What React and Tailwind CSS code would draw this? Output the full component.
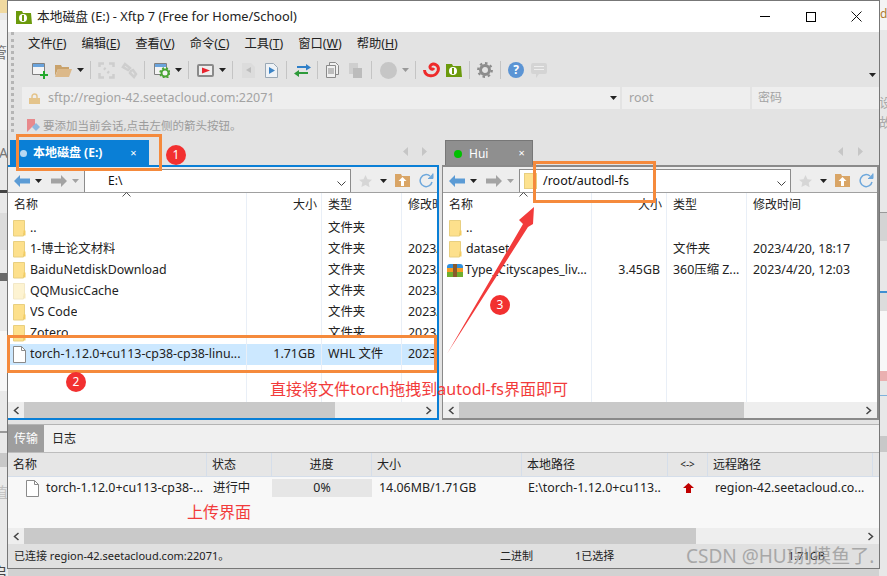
import React from "react";

const FONT = "font-['Noto_Sans','Noto_Sans_CJK_SC',sans-serif]";

function Folder({ pale }) {
  return (
    <svg width="13" height="17" viewBox="0 0 13 17" className="shrink-0">
      <path d="M.5.5h11v12l-1 .5v3H.5z" fill={pale ? "#fdf3d2" : "#fde08c"} stroke={pale ? "#f2e8c8" : "#e8cf80"} />
      <path d="M10.5 10.5h2v5h-2z" fill={pale ? "#f6e8bd" : "#f3cc62"} />
    </svg>
  );
}

function FileIcon() {
  return (
    <svg width="13" height="17" viewBox="0 0 13 17" className="shrink-0">
      <path d="M.5.5h8l4 4v12H.5z" fill="#fff" stroke="#8a8a8a" />
      <path d="M8.5.5v4h4" fill="none" stroke="#8a8a8a" />
    </svg>
  );
}

function ZipIcon() {
  return (
    <svg width="16" height="14" viewBox="0 0 16 14" className="shrink-0 -mr-[2px]">
      <path d="M0 4a3 3 0 0 1 3-3h10a3 3 0 0 1 3 3v1H0z" fill="#2f8fdc" />
      <path d="M0 5h16v4H0z" fill="#f59a23" />
      <path d="M0 9h16v5H0z" fill="#6fae2e" />
      <path d="M6 1h4v13H6z" fill="#8a5a2b" />
    </svg>
  );
}

function Caret({ color = "#222", className = "" }) {
  return (
    <svg width="7" height="4" viewBox="0 0 7 4" className={`shrink-0 ${className}`}>
      <path d="M0 0h7L3.5 4z" fill={color} />
    </svg>
  );
}

function Sep({ className = "" }) {
  return <div className={`w-px h-[18px] bg-[#c4c4c4] shrink-0 ${className}`} />;
}

function XftpLogo({ className = "" }) {
  return (
    <svg width="16" height="14" viewBox="0 0 16 14" className={`shrink-0 ${className}`}>
      <path d="M0 1h6l1 2h8l1 11H0z" fill="#6b9a0c" />
      <circle cx="7" cy="8" r="4" fill="#fff" />
      <path d="M7 5v6" stroke="#6b9a0c" strokeWidth="2" />
    </svg>
  );
}

function Toolbar() {
  return (
    <div className="flex items-center h-[26px] pl-[24px] shrink-0">
      <svg width="16" height="17" viewBox="0 0 16 17" className="shrink-0">
        <path d="M.5 1.5h12v11H.5z" fill="#f4f4f4" stroke="#808080" />
        <path d="M1 2h11v3H1z" fill="#6aa3dc" />
        <path d="M11 9h2v3h3v2h-3v3h-2v-3H8v-2h3z" fill="#22a82c" />
      </svg>
      <svg width="17" height="13" viewBox="0 0 17 13" className="ml-[7px] shrink-0">
        <path d="M0 1h6l1 2h7v2H3L0 12z" fill="#c9a26b" />
        <path d="M3 5h14l-3 8H0z" fill="#dcb98a" />
      </svg>
      <Caret className="ml-[5px]" />
      <Sep className="ml-[6px]" />
      <svg width="17" height="17" viewBox="0 0 17 17" fill="none" stroke="#cecece" strokeWidth="2.500" className="ml-[7px] shrink-0">
        <path d="M1.500 5V1.500H6M15.500 12v3.500H11M11 1.500h4.500V5M1.500 11v4.500H6M6 6l1.500 1.500M11 11L9.500 9.500" />
      </svg>
      <svg width="17" height="17" viewBox="0 0 17 17" fill="none" stroke="#cecece" strokeWidth="2.500" className="ml-[6px] shrink-0">
        <path d="M2 5l2-3 5 4-2 2zM10 9l2-1 3 4-2 3-4-4z" />
      </svg>
      <Sep className="ml-[6px]" />
      <svg width="16" height="16" viewBox="0 0 16 16" className="ml-[9px] shrink-0">
        <path d="M.5 1.500h12v11H.5z" fill="#f4f4f4" stroke="#808080" />
        <path d="M1 2h11v3H1z" fill="#6aa3dc" />
        <circle cx="11" cy="11" r="3.500" fill="#f4f4f4" stroke="#4aa534" strokeWidth="2" />
        <circle cx="11" cy="11" r="5" fill="none" stroke="#4aa534" strokeWidth="1.500" strokeDasharray="2 2" />
      </svg>
      <Caret className="ml-[5px]" />
      <Sep className="ml-[6px]" />
      <svg width="17" height="13" viewBox="0 0 17 13" className="ml-[8px] shrink-0">
        <rect x="1" y="1" width="15" height="11" rx="1" fill="#eee" stroke="#8a8a8a" strokeWidth="2" />
        <path d="M5 3.500l8 3-8 3z" fill="#e8232e" />
      </svg>
      <Caret className="ml-[5px]" />
      <Sep className="ml-[6px]" />
      <svg width="13" height="15" viewBox="0 0 13 15" className="ml-[9px] shrink-0">
        <path d="M0 0h9l4 4v11H0z" fill="#dcdcdc" />
        <path d="M9 4v6L4 7z" fill="#bdbdbd" />
      </svg>
      <svg width="13" height="15" viewBox="0 0 13 15" className="ml-[10px] shrink-0">
        <path d="M.5.500h8l4 4v10H.5z" fill="#eef2f6" stroke="#9aa8b5" />
        <path d="M4 4v7l6-3.500z" fill="#3d84c6" />
      </svg>
      <Sep className="ml-[8px]" />
      <svg width="17" height="13" viewBox="0 0 17 13" className="ml-[7px] shrink-0">
        <path d="M3 2h9V0l5 3.500-5 3V4H3z" fill="#2f7fc8" />
        <path d="M14 8H5V6l-5 3.500 5 3.500v-3h9z" fill="#2d9a3a" />
      </svg>
      <Sep className="ml-[6px]" />
      <svg width="13" height="16" viewBox="0 0 13 16" fill="#f0f0f0" stroke="#8a8a8a" className="ml-[8px] shrink-0">
        <path d="M3.500 .5h6l3 3v9h-9z" />
        <path d="M.5 3.500h9v12h-9z" />
        <path d="M2 7h6M2 9h6M2 11h6" />
      </svg>
      <svg width="13" height="16" viewBox="0 0 13 16" className="ml-[10px] shrink-0">
        <path d="M0 1h9v11H0z" fill="#cfcfcf" />
        <path d="M4 6h9v10H4z" fill="#bcbcbc" />
      </svg>
      <Sep className="ml-[9px]" />
      <div className="w-[17px] h-[17px] rounded-full bg-[#c6c6c6] ml-[8px] shrink-0" />
      <Caret color="#999" className="ml-[5px]" />
      <Sep className="ml-[6px]" />
      <svg width="17" height="17" viewBox="0 0 17 17" fill="none" stroke="#ee2b2b" strokeWidth="3" className="ml-[7px] shrink-0">
        <path d="M1.500 8C2 15 12 16 15 9 17 3 10 0 7.500 3.500 6 6 9 9 11 6" />
      </svg>
      <XftpLogo className="ml-[6px]" />
      <Sep className="ml-[7px]" />
      <svg width="16" height="16" viewBox="0 0 16 16" className="ml-[7px] shrink-0">
        <circle cx="8" cy="8" r="4.500" fill="none" stroke="#8c8c8c" strokeWidth="3" />
        <circle cx="8" cy="8" r="6.800" fill="none" stroke="#8c8c8c" strokeWidth="2.200" strokeDasharray="2.500 2.800" />
      </svg>
      <Sep className="ml-[7px]" />
      <div className="w-[16px] h-[16px] ml-[7px] shrink-0 rounded-full bg-[#5b94d4] text-white text-[12px] leading-[16px] text-center font-bold">?</div>
      <svg width="16" height="15" viewBox="0 0 16 15" className="ml-[7px] shrink-0">
        <path d="M2 0h12a2 2 0 0 1 2 2v7a2 2 0 0 1-2 2H8l-3 4v-4H2a2 2 0 0 1-2-2V2a2 2 0 0 1 2-2z" fill="#d4d4d4" />
        <path d="M3 3.500h10M3 6.500h10" stroke="#eee" />
      </svg>
      <Caret className="ml-auto mr-[3px] mt-[10px]" />
    </div>
  );
}

function NavBar({ path, hasFolder }) {
  return (
    <div className="flex items-center h-[25px] pt-[2px] bg-[#eeeeee] shrink-0">
      <svg width="16" height="12" viewBox="0 0 16 12" className="ml-[6px] shrink-0">
        <path d="M0 6l6-6v3.500h10v5H6V12z" fill="#5b9bd5" />
      </svg>
      <Caret className="ml-[5px]" />
      <svg width="16" height="12" viewBox="0 0 16 12" className="ml-[9px] shrink-0">
        <path d="M16 6l-6-6v3.500H0v5h10V12z" fill="#a3a3a3" />
      </svg>
      <Caret color="#a3a3a3" className="ml-[5px]" />
      <div className="ml-[5px] flex-1 h-[23px] bg-white border-x border-t border-[#8c8c8c] flex items-center relative">
        {hasFolder ? (
          <>
            <div className="w-[13px] h-[16px] ml-[4px] bg-[#fde28f] border border-[#e8cf80]" />
            <span className="ml-[6px] text-[12.500px] text-[#111]">{path}</span>
          </>
        ) : (
          <span className="ml-[23px] text-[12px] text-[#111]">{path}</span>
        )}
        <svg width="9" height="5" viewBox="0 0 9 5" className="absolute right-[4px] top-[11px]" fill="none" stroke="#444">
          <path d="M.5.5l4 4 4-4" />
        </svg>
      </div>
      <svg width="13" height="12" viewBox="0 0 13 12" className="ml-[8px] shrink-0">
        <path d="M6.500 0l2 4.300 4.500.5-3.300 3 .9 4.500-4.100-2.300L2.400 12l.9-4.500L0 4.800l4.500-.5z" fill="#d6d6d6" />
      </svg>
      <Caret className="ml-[8px]" />
      <svg width="15" height="13" viewBox="0 0 15 13" className="ml-[8px] shrink-0">
        <path d="M0 0h6l1 2h8v11H0z" fill="#d9a566" />
        <path d="M7.500 3l4 4H9v5H6V7H3.500z" fill="#fff" />
      </svg>
      <svg width="15" height="15" viewBox="0 0 15 15" className="ml-[9px] mr-[3px] shrink-0" fill="none" stroke="#6ea8dc" strokeWidth="1.500">
        <path d="M13 9a6 6 0 1 1-2-6" />
        <path d="M9 5.500h5v-5" strokeWidth="1" fill="#6ea8dc" />
      </svg>
    </div>
  );
}

function ColHead({ label, w, right, last }) {
  return (
    <div
      className={`h-full shrink-0 flex items-center text-[12px] text-[#222] ${right ? "justify-end pr-[5px]" : "pl-[6px]"} ${last ? "overflow-hidden whitespace-nowrap" : ""}`}
      style={{ width: w }}
    >
      {label}
    </div>
  );
}

function FileRow({ icon, name, size, type, date, cols, selected, iconPad = 5 }) {
  return (
    <div className={`flex h-[21px] items-center text-[12.400px] text-[#222] whitespace-nowrap ${selected ? "bg-[#cce8ff]" : ""}`}>
      <div className="flex items-center overflow-hidden shrink-0" style={{ width: cols[0], paddingLeft: iconPad }}>
        {icon}
        <span className="ml-[4px] overflow-hidden">{name}</span>
      </div>
      <div className="text-right pr-[7px] shrink-0" style={{ width: cols[1] }}>{size}</div>
      <div className="pl-[6px] overflow-hidden shrink-0" style={{ width: cols[2] }}>{type}</div>
      <div className="pl-[6px] overflow-hidden" style={{ width: cols[3] }}>{date}</div>
    </div>
  );
}

function HScroll({ thumbWidth, thumbLeft = 4 }) {
  return (
    <div className="h-[16px] bg-[#eeeeee] flex items-center shrink-0">
      <svg width="7" height="9" viewBox="0 0 7 9" className="ml-[5px] shrink-0" fill="none" stroke="#444" strokeWidth="1.500">
        <path d="M5.500 1l-4 3.500 4 3.500" />
      </svg>
      <div className="h-full bg-[#c9c9c9]" style={{ width: thumbWidth, marginLeft: thumbLeft }} />
      <svg width="7" height="9" viewBox="0 0 7 9" className="ml-auto mr-[5px] shrink-0" fill="none" stroke="#444" strokeWidth="1.500">
        <path d="M1.500 1l4 3.500-4 3.500" />
      </svg>
    </div>
  );
}

function Panel({ cols, rows, path, hasFolder, scrollW, border, caretLeft, className }) {
  return (
    <div className={`flex flex-col h-[255px] border-t-2 border-b-2 border-r-2 ${border} ${className}`}>
      <NavBar path={path} hasFolder={hasFolder} />
      <div className="flex-1 bg-white relative overflow-hidden flex flex-col">
        <div className="flex h-[23px] pt-[1px] border-t border-[#a0a0a0] shrink-0 items-center">
          <ColHead label="名称" w={cols[0]} />
          <ColHead label="大小" w={cols[1]} right />
          <ColHead label="类型" w={cols[2]} />
          <ColHead label="修改时间" w={cols[3]} last />
        </div>
        <div className="pt-[3px] flex-1">{rows}</div>
        <div className="absolute top-[1px] bottom-0 border-r border-[#e9eff7]" style={{ left: cols[0] - 1 }} />
        <div className="absolute top-[1px] bottom-0 border-r border-[#e9eff7]" style={{ left: cols[0] + cols[1] - 1 }} />
        <div className="absolute top-[1px] bottom-0 border-r border-[#e9eff7]" style={{ left: cols[0] + cols[1] + cols[2] - 1 }} />
        <svg width="9" height="5" viewBox="0 0 9 5" className="absolute top-0" style={{ left: caretLeft }} fill="none" stroke="#555">
          <path d="M.5 4.500l4-4 4 4" />
        </svg>
      </div>
      <HScroll thumbWidth={scrollW} />
    </div>
  );
}

function TransferCell({ w, children, className = "" }) {
  return (
    <div className={`shrink-0 overflow-hidden whitespace-nowrap ${className}`} style={{ width: w }}>
      {children}
    </div>
  );
}

const LEFT_COLS = [239, 75, 80, 35];
const RIGHT_COLS = [149, 75, 80, 130];
const TR_COLS = [199, 65, 100, 150, 146, 40, 165];

function Annotation({ n, className }) {
  return (
    <div className={`absolute w-[20px] h-[20px] rounded-full bg-[#f23030] text-white text-[12px] leading-[20px] text-center ${className}`}>
      {n}
    </div>
  );
}

export default function App() {
  return (
    <div className={`w-[887px] h-[576px] relative overflow-hidden bg-[#d2d2d2] ${FONT}`}>
      {/* desktop behind the window */}
      <div className="absolute left-0 top-0 w-[8px] h-[576px] bg-[#e9e9e9] overflow-hidden text-[#777]">
        <div className="h-[13px] bg-[#f0d9a0]" />
        <div className="mt-[7px] h-[110px] bg-[#f2f2f2]" />
        <div className="mt-[60px] h-[3px] bg-[#444]" />
        <div className="mt-[20px] h-[37px] bg-[#dcdcdc]" />
        <div className="mt-[23px] h-[8px] bg-[#6a6a6a]" />
        <div className="mt-[50px] h-[60px] bg-[#f7f7f7]" />
        <div className="mt-[40px] h-[2px] bg-[#999]" />
        <div className="mt-[20px] h-[14px] bg-[#c8c8c8]" />
        <span className="absolute left-[-8px] top-[42px] text-[15px] leading-[20px]">管</span>
        <span className="absolute left-[-1px] top-[143px] text-[14px] leading-[20px]">A</span>
        <span className="absolute left-[-7px] top-[482px] text-[15px] leading-[20px] text-[#c0c0c0]">值</span>
        <span className="absolute left-[-8px] top-[562px] text-[15px] leading-[20px] text-[#444]">启</span>
      </div>
      <div className="absolute right-0 top-0 w-[8px] h-[576px] bg-[#e8e8e8] overflow-hidden">
        <div className="h-[30px] bg-[#f4f4f4]" />
        <div className="mt-[182px] h-px bg-[#999]" />
        <div className="h-[28px] bg-[#d4d4d4]" />
        <div className="mt-[50px] h-[2px] bg-[#3f8fd2]" />
        <div className="h-[18px] bg-[#dcdcdc]" />
        <div className="h-[60px] bg-[#f8f8f8]" />
        <div className="h-[10px] bg-[#eab0b0]" />
        <div className="mt-[14px] h-px bg-[#7fb2dc]" />
        <div className="mt-[40px] h-[16px] bg-[#c8c8c8]" />
        <span className="absolute left-[1px] top-[6px] text-[12px] leading-[16px] text-[#b07a30]">d</span>
        <span className="absolute left-[0px] top-[92px] text-[13px] leading-[20px] text-[#aaa]">设</span>
        <span className="absolute left-[0px] top-[112px] text-[13px] leading-[20px] text-[#aaa]">故</span>
      </div>

      {/* window */}
      <div className="absolute left-[7px] top-0 w-[873px] h-[569px] border border-[#777] flex flex-col bg-[#e3e3e3]">
        <div className="absolute left-[3px] top-[31px] h-[100px] border-l-[3px] border-dotted border-[#b5b5b5]" />

        <div className="h-[31px] bg-white flex items-center shrink-0">
          <XftpLogo className="ml-[8px]" />
          <span className="ml-[5px] text-[12.750px] text-[#222]">本地磁盘 (E:) - Xftp 7 (Free for Home/School)</span>
          <div className="ml-auto flex items-center">
            <div className="w-[10px] h-px bg-black mr-[36px]" />
            <div className="w-[10px] h-[10px] border border-black mr-[35px]" />
            <svg width="11" height="11" viewBox="0 0 11 11" className="mr-[17px]" stroke="#111">
              <path d="M.5.500l10 10M10.500.500l-10 10" />
            </svg>
          </div>
        </div>

        <div className="flex h-[25px] items-center gap-[15px] pl-[20px] text-[12.300px] text-[#222] shrink-0">
          <span>文件(<u>F</u>)</span>
          <span>编辑(<u>E</u>)</span>
          <span>查看(<u>V</u>)</span>
          <span>命令(<u>C</u>)</span>
          <span>工具(<u>T</u>)</span>
          <span>窗口(<u>W</u>)</span>
          <span>帮助(<u>H</u>)</span>
        </div>

        <Toolbar />

        <div className="flex h-[22px] mt-[4px] ml-[14px] gap-[2px] text-[12.500px] text-[#a3a3a3] shrink-0">
          <div className="w-[598px] bg-[#eeeeee] flex items-center pl-[7px] relative">
            <svg width="11" height="11" viewBox="0 0 11 11">
              <path d="M3 5V3.500a2.500 2.500 0 0 1 5 0V5" fill="none" stroke="#e4c48c" strokeWidth="1.500" />
              <path d="M0 5h11v6H0z" fill="#e4c48c" />
            </svg>
            <span className="ml-[8px]">sftp://region-42.seetacloud.com:22071</span>
            <Caret className="absolute right-[3px] top-[9px]" />
          </div>
          <div className="w-[128px] bg-[#eeeeee] flex items-center pl-[7px]">root</div>
          <div className="flex-1 bg-[#eeeeee] flex items-center pl-[6px] text-[12px]">密码</div>
        </div>

        <div className="flex items-center h-[25px] mt-[4px] ml-[19px] text-[11.500px] text-[#9c9c9c] shrink-0">
          <svg width="13" height="13" viewBox="0 0 13 13" className="shrink-0">
            <path d="M0 0h8v6l-3 2-5 5z" fill="#e8898c" />
            <path d="M5 8l4-4 4 4-4 4z" fill="#8eb8de" />
          </svg>
          <span className="ml-[3px]">要添加当前会话,点击左侧的箭头按钮。</span>
        </div>

        {/* tabs */}
        <div className="flex h-[27px] shrink-0">
          <div className="w-[431px] shrink-0 flex items-end">
            <div className="w-[139px] h-[25px] ml-[2px] pt-[1px] bg-[#0a7fd6] text-white flex items-center pl-[10px] text-[12px] font-bold">
              <div className="w-[7px] h-[7px] rounded-full bg-[#b9d9f2]" />
              <span className="ml-[6px]">本地磁盘 (E:)</span>
              <span className="ml-[28px] font-normal text-[11px]">×</span>
            </div>
            <svg width="30" height="9" viewBox="0 0 30 9" className="ml-auto mb-[9px] mr-[6px]" fill="#c6c6c6">
              <path d="M5 0v9L0 4.500zM19 0v9l5-4.500z" />
            </svg>
          </div>
          <div className="flex-1 flex items-end ml-[6px]">
            <div className="w-[88px] h-[25px] pt-[1px] bg-[#8f8f8f] border border-[#777] border-b-0 text-white flex items-center pl-[8px] text-[12px]">
              <div className="w-[8px] h-[8px] rounded-full bg-[#00c000]" />
              <span className="ml-[7px]">Hui</span>
              <span className="ml-[30px] text-[11px]">×</span>
            </div>
            <svg width="30" height="9" viewBox="0 0 30 9" className="ml-auto mb-[9px] mr-[11px]" fill="#c6c6c6">
              <path d="M5 0v9L0 4.500zM20 0v9l5-4.500z" />
            </svg>
          </div>
        </div>

        {/* file panels */}
        <div className="flex shrink-0">
          <Panel
            className="w-[431px] shrink-0"
            border="border-[#0a7fd6]"
            cols={LEFT_COLS}
            path="E:\"
            scrollW={311}
            caretLeft={114}
            rows={
              <>
                <FileRow cols={LEFT_COLS} icon={<Folder />} name=".." type="文件夹" />
                <FileRow cols={LEFT_COLS} icon={<Folder />} name="1-博士论文材料" type="文件夹" date="2023/" />
                <FileRow cols={LEFT_COLS} icon={<Folder />} name="BaiduNetdiskDownload" type="文件夹" date="2023/" />
                <FileRow cols={LEFT_COLS} icon={<Folder pale />} name="QQMusicCache" type="文件夹" date="2023/" />
                <FileRow cols={LEFT_COLS} icon={<Folder />} name="VS Code" type="文件夹" date="2023/" />
                <FileRow cols={LEFT_COLS} icon={<Folder />} name="Zotero" type="文件夹" date="2023/" />
                <FileRow cols={LEFT_COLS} icon={<FileIcon />} name="torch-1.12.0+cu113-cp38-cp38-linu..." size="1.71GB" type="WHL 文件" date="2023/" selected />
              </>
            }
          />
          <Panel
            className="flex-1 ml-[3px] border-l"
            border="border-[#8a8a8a]"
            cols={RIGHT_COLS}
            path="/root/autodl-fs"
            hasFolder
            scrollW={285}
            caretLeft={76}
            rows={
              <>
                <FileRow cols={RIGHT_COLS} iconPad={6} icon={<Folder />} name=".." />
                <FileRow cols={RIGHT_COLS} iconPad={6} icon={<Folder />} name="dataset" type="文件夹" date="2023/4/20, 18:17" />
                <FileRow cols={RIGHT_COLS} iconPad={4} icon={<ZipIcon />} name="Type_Cityscapes_liv..." size="3.45GB" type="360压缩 Z..." date="2023/4/20, 12:03" />
              </>
            }
          />
        </div>

        {/* transfer area */}
        <div className="mt-[4px] flex-1 flex flex-col border-t border-[#b4b4b4] bg-[#f0f0f0]">
          <div className="flex h-[28px] shrink-0 items-center border-b border-[#bdbdbd] text-[12px]">
            <div className="w-[36px] h-full bg-[#9e9e9e] text-white flex items-center justify-center">传输</div>
            <div className="ml-[8px] text-[#222]">日志</div>
          </div>
          <div className="flex h-[24px] shrink-0 items-center bg-[#e6e6e6] border-b border-[#d5deea] text-[12px] text-[#222]">
            <TransferCell w={TR_COLS[0]} className="pl-[5px] h-full flex items-center border-r border-[#d5deea]">名称</TransferCell>
            <TransferCell w={TR_COLS[1]} className="pl-[5px] h-full flex items-center border-r border-[#d5deea]">状态</TransferCell>
            <TransferCell w={TR_COLS[2]} className="h-full flex items-center justify-center border-r border-[#d5deea]">进度</TransferCell>
            <TransferCell w={TR_COLS[3]} className="pl-[5px] h-full flex items-center border-r border-[#d5deea]">大小</TransferCell>
            <TransferCell w={TR_COLS[4]} className="pl-[5px] h-full flex items-center border-r border-[#d5deea]">本地路径</TransferCell>
            <TransferCell w={TR_COLS[5]} className="h-full flex items-center justify-center border-r border-[#d5deea] text-[10px]">&lt;-&gt;</TransferCell>
            <TransferCell w={TR_COLS[6]} className="pl-[5px] h-full flex items-center border-r border-[#d5deea]">远程路径</TransferCell>
          </div>
          <div className="flex-1 bg-[#f8f8f8] text-[12.400px] text-[#222]">
            <div className="flex items-center h-[18px] mt-[2px]">
              <TransferCell w={TR_COLS[0]} className="pl-[18px] flex items-center">
                <FileIcon />
                <span className="ml-[7px]">torch-1.12.0+cu113-cp38-...</span>
              </TransferCell>
              <TransferCell w={TR_COLS[1]} className="pl-[6px]">进行中</TransferCell>
              <TransferCell w={TR_COLS[2]} className="h-full bg-[#e6e6e6] text-center">0%</TransferCell>
              <TransferCell w={TR_COLS[3]} className="pl-[7px]">14.06MB/1.71GB</TransferCell>
              <TransferCell w={TR_COLS[4]} className="pl-[6px]">E:\torch-1.12.0+cu113..</TransferCell>
              <TransferCell w={TR_COLS[5]} className="flex justify-center">
                <svg width="11" height="10" viewBox="0 0 11 10">
                  <path d="M5.500 0L11 5H8v5H3V5H0z" fill="#c00000" />
                </svg>
              </TransferCell>
              <TransferCell w={TR_COLS[6]} className="pl-[7px]">region-42.seetacloud.co...</TransferCell>
            </div>
          </div>
          <HScroll thumbWidth={672} />
          <div className="flex h-[24px] shrink-0 items-center bg-[#e0e0e0] text-[11px] text-[#222] whitespace-nowrap">
            <span className="ml-[6px] w-[486px] shrink-0">已连接 region-42.seetacloud.com:22071。</span>
            <span className="w-[75px] shrink-0">二进制</span>
            <span className="w-[213px] shrink-0">1已选择</span>
            <span>1.71GB</span>
          </div>
        </div>
      </div>

      {/* annotations drawn over the screenshot */}
      <div className="absolute left-[16px] top-[134px] w-[146px] h-[37px] border-[3px] border-[#f58a3c]" />
      <div className="absolute left-[7px] top-[335px] w-[430px] h-[38px] border-[3px] border-[#f58a3c]" />
      <div className="absolute left-[533px] top-[161px] w-[123px] h-[42px] border-[3px] border-[#f58a3c]" />
      <Annotation n="1" className="left-[166px] top-[145px]" />
      <Annotation n="2" className="left-[66px] top-[372px]" />
      <Annotation n="3" className="left-[490px] top-[295px]" />
      <svg width="100" height="160" viewBox="0 0 100 160" className="absolute left-[440px] top-[200px]">
        <path d="M7.500 153L83 24 79 20 94 7 93 24 88 27z" fill="#f23b3b" />
      </svg>
      <div className="absolute left-[270px] top-[378px] text-[16px] leading-[22px] text-[#f23b3b] whitespace-nowrap">直接将文件torch拖拽到autodl-fs界面即可</div>
      <div className="absolute left-[187px] top-[501px] text-[16px] leading-[22px] text-[#f23b3b] whitespace-nowrap">上传界面</div>
      <div className="absolute left-[686px] top-[544px] text-[19px] leading-[24px] text-[#9a9a9a] opacity-80 whitespace-nowrap">CSDN @HUI别摸鱼了.</div>
    </div>
  );
}
